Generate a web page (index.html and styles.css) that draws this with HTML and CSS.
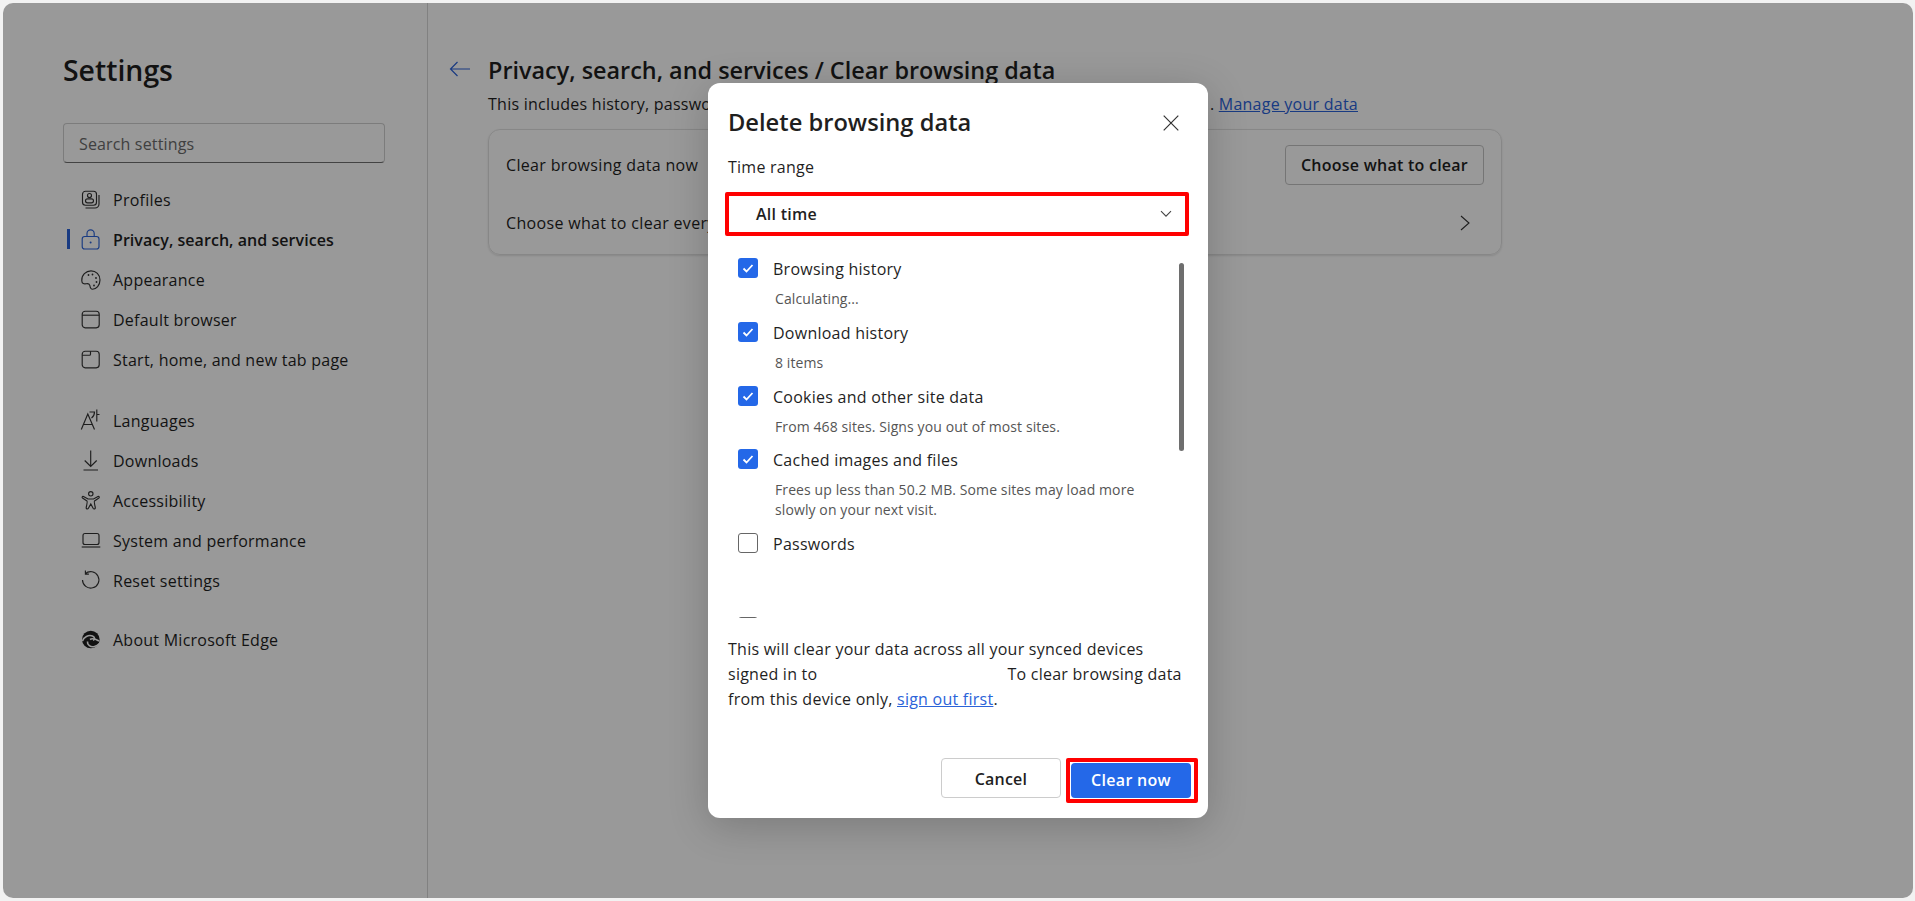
FILE: index.html
```html
<!DOCTYPE html>
<html lang="en">
<head>
  <meta charset="UTF-8">
  <title>Settings</title>
  <link rel="stylesheet" href="styles.css">
</head>
<body>
  <div class="panel">
    <!-- Sidebar -->
    <aside class="sidebar">
      <h1>Settings</h1>
      <div class="search">Search settings</div>
      <nav class="nav">
        <a class="nav-item">
          <svg class="icon" viewBox="0 0 20 20"><rect x="1.5" y="1.2" width="14" height="14" rx="3"/><path d="M18 5v9a4 4 0 0 1-4 4H4.500"/><circle cx="8.500" cy="5.500" r="2"/><rect x="4.500" y="8.800" width="8" height="4" rx="2"/></svg>
          Profiles
        </a>
        <a class="nav-item active">
          <svg class="icon" viewBox="0 0 20 20"><rect x="1.200" y="6.500" width="16.800" height="12.500" rx="2.500"/><path d="M6 6.500V3.500a3.600 3.600 0 0 1 7.200 0v3"/><circle class="dot" cx="9.600" cy="12.500" r="1"/></svg>
          Privacy, search, and services
        </a>
        <a class="nav-item">
          <svg class="icon" viewBox="0 0 20 20"><path d="M10 .8c5 0 9 4 9 9.200s-3.700 9.200-7.500 9.200c-2.500 0-2.200-2.300-2.700-3.800-.6-1.800-2-2-3.600-1.700-2 .4-4.400 0-4.400-3C.3 5.200 5 .8 10 .8z"/><circle class="dot" cx="7.500" cy="5" r=".9"/><circle class="dot" cx="11.500" cy="4.500" r=".9"/><circle class="dot" cx="15" cy="8" r=".9"/><circle class="dot" cx="15.500" cy="12" r=".9"/><circle class="dot" cx="13" cy="15.500" r=".9"/></svg>
          Appearance
        </a>
        <a class="nav-item">
          <svg class="icon" viewBox="0 0 20 20"><rect x="1.200" y="1.200" width="17" height="16.600" rx="3"/><path d="M1.200 5.200h17"/></svg>
          Default browser
        </a>
        <a class="nav-item">
          <svg class="icon" viewBox="0 0 20 20"><rect x="1.200" y="1.200" width="17" height="16.600" rx="3"/><path d="M1.200 5.200H8.500a1 1 0 0 0 1-1v-3"/></svg>
          Start, home, and new tab page
        </a>
        <a class="nav-item group-start">
          <svg class="icon" viewBox="0 0 20 20"><path d="M.3 18.500 6.800 3l6.700 15.500M2.600 13.500h8.500M8.500 1h5c0 2.500-1 4.500-3 6M15.800-1.500v12M15.800 3.500h2.700"/></svg>
          Languages
        </a>
        <a class="nav-item">
          <svg class="icon" viewBox="0 0 20 20"><path d="M9.700-.5v16M3.700 9.500l6 6 6-6M2.500 19h14.500"/></svg>
          Downloads
        </a>
        <a class="nav-item">
          <svg class="icon" viewBox="0 0 20 20"><circle cx="9.800" cy="2.800" r="2.200"/><path d="M2.500 5.500 7 8h5.500L17 5.500c1-.5 1.800.8.900 1.500L13.500 10c-.5.4 0 3 .8 6.500.3 1.500-1.500 2-2.200.8L9.800 13l-2.400 4.300c-.7 1.200-2.500.7-2.200-.8C6 13 6.500 10.400 6 10L1.500 7c-.9-.7 0-2 1-1.500z"/></svg>
          Accessibility
        </a>
        <a class="nav-item">
          <svg class="icon" viewBox="0 0 20 20"><rect x="2" y="2.500" width="16" height="11" rx="2"/><path d="M.7 16h18.600"/></svg>
          System and performance
        </a>
        <a class="nav-item">
          <svg class="icon" viewBox="0 0 20 20"><path d="M4.200 2.800A8.200 8.200 0 1 1 1.500 9M4.400-.4v3.500h3.500"/></svg>
          Reset settings
        </a>
        <a class="nav-item group-about">
          <svg class="icon edge" viewBox="0 0 20 20"><circle class="edge-body" cx="9.800" cy="9.500" r="8.800"/><path class="edge-cut" d="M1.500 11c1-4 6-6.500 10-5 2.500 1 2.800 3.500.5 4.300M6.500 11.500c-.5 3.500 3 6 7 5 2-.5 3.500-1.500 5-3M9 9.500c2-1.500 5.500-.5 9 1.500"/></svg>
          About Microsoft Edge
        </a>
      </nav>
    </aside>

    <!-- Main content -->
    <main class="main">
      <div class="page-head">
        <svg class="back" viewBox="0 0 22 16"><path d="M21 8H1.500M8.500 1 1.500 8l7 7"/></svg>
        <div class="page-title">
          <h2>Privacy, search, and services / Clear browsing data</h2>
          <p class="page-sub"><span>This includes history, passwo</span><span>. <a>Manage your data</a></span></p>
        </div>
      </div>
      <div class="card">
        <div class="card-row">
          <span>Clear browsing data now</span>
          <button class="btn-outline" type="button">Choose what to clear</button>
        </div>
        <div class="card-row">
          <span>Choose what to clear every</span>
          <svg class="chevron-right" viewBox="0 0 10 16"><path d="M1 1l8 7-8 7"/></svg>
        </div>
      </div>
    </main>

    <!-- Dialog and its backdrop -->
    <div class="overlay">
      <section class="modal">
        <header class="modal-head">
          <h3>Delete browsing data</h3>
          <svg class="close" viewBox="0 0 16 16"><path d="M.7.7l14.600 14.600M15.300.7.700 15.300"/></svg>
        </header>
        <div class="field-label">Time range</div>
        <div class="select">
          <span>All time</span>
          <svg class="chevron-down" viewBox="0 0 12 8"><path d="M1 1.200l5 5 5-5"/></svg>
        </div>

        <div class="list">
          <div class="item">
            <span class="check on"><svg viewBox="0 0 20 20"><path d="M5.500 10.500l3 3 6-6.500"/></svg></span>
            <div>
              <div class="item-label">Browsing history</div>
              <div class="item-sub">Calculating...</div>
            </div>
          </div>
          <div class="item">
            <span class="check on"><svg viewBox="0 0 20 20"><path d="M5.500 10.500l3 3 6-6.500"/></svg></span>
            <div>
              <div class="item-label">Download history</div>
              <div class="item-sub">8 items</div>
            </div>
          </div>
          <div class="item">
            <span class="check on"><svg viewBox="0 0 20 20"><path d="M5.500 10.500l3 3 6-6.500"/></svg></span>
            <div>
              <div class="item-label">Cookies and other site data</div>
              <div class="item-sub">From 468 sites. Signs you out of most sites.</div>
            </div>
          </div>
          <div class="item">
            <span class="check on"><svg viewBox="0 0 20 20"><path d="M5.500 10.500l3 3 6-6.500"/></svg></span>
            <div>
              <div class="item-label">Cached images and files</div>
              <div class="item-sub">Frees up less than 50.2 MB. Some sites may load more<br>slowly on your next visit.</div>
            </div>
          </div>
          <div class="item">
            <span class="check"></span>
            <div>
              <div class="item-label">Passwords</div>
              <div class="item-sub item-sub-blank"></div>
            </div>
          </div>
          <div class="item">
            <span class="check"></span>
          </div>
          <div class="scroll-thumb"></div>
        </div>

        <p class="note">This will clear your data across all your synced devices<br>signed in to<span class="redacted"></span>To clear browsing data<br>from this device only, <a>sign out first</a>.</p>

        <footer class="actions">
          <button class="btn-cancel" type="button">Cancel</button>
          <div class="mark">
            <button class="btn-primary" type="button">Clear now</button>
          </div>
        </footer>
      </section>
    </div>
  </div>
</body>
</html>
```

FILE: styles.css
```css
/* Global reset */
* {
  margin: 0;
  padding: 0;
  box-sizing: border-box;
}

html,
body {
  height: 100%;
  overflow: hidden;
}

body {
  font-family: "Open Sans", "Noto Sans", sans-serif;
  font-size: 16px;
  letter-spacing: 0.25px;
  color: #1f1f1f;
  background-color: #f2f2f2;
  padding: 3px 2px 3px 3px;
}

/* Window */
.panel {
  position: relative;
  display: flex;
  height: 100%;
  background-color: #fff;
  border-radius: 10px;
  overflow: hidden;
}

/* Sidebar */
.sidebar {
  width: 425px;
  flex-shrink: 0;
  padding: 0 42px 0 60px;
  border-right: 1px solid #d8d8d8;
}

.sidebar h1 {
  font-size: 28.4px;
  font-weight: 600;
  line-height: 40px;
  letter-spacing: 0;
  margin-top: 47px;
}

.search {
  height: 40px;
  margin-top: 33px;
  padding-left: 15px;
  line-height: 40px;
  letter-spacing: 0.15px;
  color: #6b6b6b;
  border: 1px solid #cfcfcf;
  border-bottom-color: #707070;
  border-radius: 4px;
}

.nav {
  margin-top: 17px;
}

.nav-item {
  position: relative;
  display: flex;
  align-items: center;
  gap: 12px;
  height: 40px;
  padding-left: 18px;
  color: #1f1f1f;
  text-decoration: none;
}

.nav-item.group-start {
  margin-top: 21px;
}

.nav-item.group-about {
  margin-top: 19px;
}

.nav-item.active {
  font-weight: 600;
  letter-spacing: 0.05px;
}

.nav-item.active::before {
  content: "";
  position: absolute;
  left: 4px;
  top: 9px;
  width: 3px;
  height: 20px;
  background-color: #2b63d9;
}

.icon {
  width: 20px;
  height: 20px;
  flex-shrink: 0;
  overflow: visible;
  fill: none;
  stroke: #333;
  stroke-width: 1.15;
}

.icon .dot {
  fill: #333;
  stroke: none;
}

.active .icon {
  stroke: #2b63d9;
}

.active .icon .dot {
  fill: #2b63d9;
}

.edge-body {
  fill: #1f1f1f;
  stroke: none;
}

.edge-cut {
  stroke: #fff;
  stroke-width: 1.6;
}

/* Main content */
.main {
  flex: 1;
  padding: 0 0 0 21px;
}

.page-head {
  display: flex;
  gap: 17px;
  margin-top: 50px;
}

.back {
  width: 22px;
  height: 16px;
  margin-top: 8px;
  flex-shrink: 0;
  fill: none;
  stroke: #2b63d9;
  stroke-width: 1.2;
}

.page-title {
  width: 870px;
}

.page-head h2 {
  font-size: 23.4px;
  font-weight: 600;
  line-height: 34px;
  letter-spacing: 0;
}

.page-sub {
  display: flex;
  justify-content: space-between;
  line-height: 34px;
}

a {
  color: #2b63d9;
  text-decoration: underline;
}

.card {
  width: 1014px;
  height: 126px;
  margin: 8px 0 0 39px;
  padding: 6px 17px 3px;
  border: 1px solid #e2e2e2;
  border-radius: 12px;
  box-shadow: 0 1px 2px rgba(0, 0, 0, 0.12);
}

.card-row {
  display: flex;
  justify-content: space-between;
  align-items: center;
  height: 58px;
  letter-spacing: 0.33px;
}

.btn-outline {
  width: 199px;
  height: 40px;
  font: 600 16px "Open Sans", sans-serif;
  letter-spacing: 0.25px;
  color: #1f1f1f;
  background: none;
  border: 1px solid #c4c4c4;
  border-radius: 4px;
}

.chevron-right {
  width: 10px;
  height: 16px;
  margin-right: 14px;
  fill: none;
  stroke: #333;
  stroke-width: 1.1;
}

/* Dialog */
.overlay {
  position: absolute;
  inset: 0;
  display: flex;
  justify-content: center;
  align-items: center;
  background-color: rgba(0, 0, 0, 0.4);
}

.modal {
  display: flex;
  flex-direction: column;
  width: 500px;
  height: 735px;
  padding: 20px 10px 15px 20px;
  background-color: #fff;
  border-radius: 12px;
  box-shadow: 0 8px 40px rgba(0, 0, 0, 0.2);
}

.modal-head {
  display: flex;
  justify-content: space-between;
  align-items: center;
  height: 38px;
  margin-bottom: 2px;
  padding-right: 19px;
}

.modal-head h3 {
  font-size: 23.7px;
  font-weight: 600;
  letter-spacing: 0;
}

.close {
  width: 16px;
  height: 16px;
  margin-top: 2px;
  fill: none;
  stroke: #333;
  stroke-width: 1.2;
}

.field-label {
  margin-top: 12px;
  line-height: 24px;
}

.select {
  display: flex;
  justify-content: space-between;
  align-items: center;
  width: 464px;
  height: 44px;
  margin: 13px 0 0 -3px;
  padding: 0 13px 0 27px;
  font-weight: 600;
  border: 4px solid #f00;
  border-radius: 2px;
}

.chevron-down {
  width: 12px;
  height: 8px;
  fill: none;
  stroke: #444;
  stroke-width: 1.1;
}

.list {
  position: relative;
  height: 370px;
  margin: 12px 0 0 10px;
  padding-top: 10.3px;
  overflow: hidden;
}

.item {
  display: flex;
  gap: 15px;
  margin-bottom: 12.7px;
}

.check {
  width: 20px;
  height: 20px;
  flex-shrink: 0;
  border: 1px solid #666;
  border-radius: 3px;
}

.check.on {
  background-color: #2468e8;
  border: none;
}

.check svg {
  display: block;
  fill: none;
  stroke: #fff;
  stroke-width: 1.8;
}

.item-label {
  height: 24px;
  line-height: 22px;
}

.item-sub {
  margin: 7px 0 0 2px;
  font-size: 14px;
  line-height: 20px;
  letter-spacing: 0.1px;
  color: #555;
}

.item-sub-blank {
  height: 40px;
}

.scroll-thumb {
  position: absolute;
  top: 15px;
  left: 441px;
  width: 5px;
  height: 188px;
  background-color: #6e6e6e;
  border-radius: 3px;
}

.note {
  margin-top: 19px;
  line-height: 25px;
  white-space: nowrap;
}

.redacted {
  display: inline-block;
  width: 190px;
}

.actions {
  display: flex;
  justify-content: flex-end;
  align-items: flex-start;
  gap: 5px;
  margin-top: auto;
}

.btn-cancel {
  width: 120px;
  height: 40px;
  padding-top: 2px;
  font: 600 16px "Open Sans", sans-serif;
  letter-spacing: 0.2px;
  color: #1f1f1f;
  background-color: #fff;
  border: 1px solid #ccc;
  border-radius: 4px;
}

.mark {
  padding: 1px 3px 1px 1px;
  border: 4px solid #f00;
  border-radius: 2px;
}

.btn-primary {
  display: block;
  width: 120px;
  height: 35px;
  padding-bottom: 2px;
  font: 600 16px "Open Sans", sans-serif;
  letter-spacing: 0.3px;
  color: #fff;
  background-color: #2468e8;
  border: none;
  border-radius: 4px;
}
```
